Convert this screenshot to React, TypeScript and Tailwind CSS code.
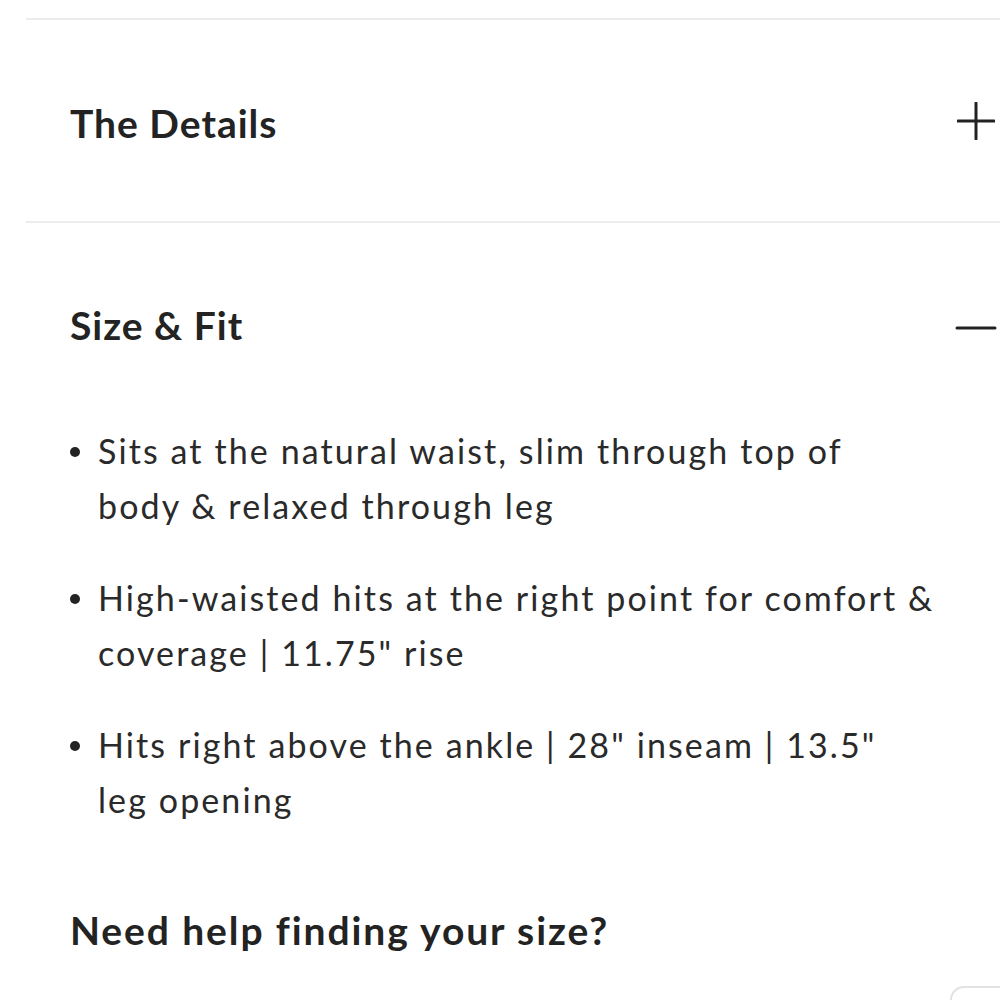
import React from "react";

const bullets = [
  ["Sits at the natural waist, slim through top of", "body & relaxed through leg"],
  ["High-waisted hits at the right point for comfort &", 'coverage | 11.75" rise'],
  ['Hits right above the ankle | 28" inseam | 13.5"', "leg opening"],
];

export default function App() {
  return (
    <div
      className="w-[1000px] h-[1000px] overflow-hidden bg-white text-[#232323]"
      style={{ fontFamily: "Lato, 'Noto Sans', sans-serif" }}
    >
      <div className="ml-[26px] mr-[-40px] pt-[18px]">
        {/* The Details */}
        <div className="border-t-2 border-[#ececec]">
          <div className="h-[201px] flex items-center justify-between pl-[44px] pr-[51px]">
            <h2 className="text-[39px] font-bold tracking-[1px] leading-none mt-[5px]">The Details</h2>
            <svg width="38" height="38" viewBox="0 0 38 38" className="mr-[-6px]">
              <path d="M19 1v36M1 19h36" stroke="#222" strokeWidth="3" strokeLinecap="round" />
            </svg>
          </div>
        </div>

        {/* Size & Fit */}
        <div className="border-t-2 border-[#ececec]">
          <div className="h-[210px] flex items-center justify-between pl-[44px] pr-[51px]">
            <h2 className="text-[39px] font-bold tracking-[1px] leading-none mt-[-5px]">Size &amp; Fit</h2>
            <svg width="42" height="6" viewBox="0 0 42 6" className="mr-[-8px]">
              <path d="M2 3h38" stroke="#222" strokeWidth="3" strokeLinecap="round" />
            </svg>
          </div>

          <ul className="pl-[44px] flex flex-col gap-[37px] mt-[-10px]">
            {bullets.map((b) => (
              <li key={b[0]} className="flex items-start">
                <span className="w-[10px] h-[10px] rounded-full bg-[#232323] mt-[24px] mr-[18px] shrink-0" />
                <p className="text-[34px] leading-[55px] tracking-[2.1px] text-[#2a2a2a] whitespace-nowrap">
                  {b[0]}
                  <br />
                  {b[1]}
                </p>
              </li>
            ))}
          </ul>

          <h3 className="pl-[44px] mt-[84px] text-[39px] font-bold tracking-[1.9px] leading-none">
            Need help finding your size?
          </h3>

          <div className="flex justify-end mt-[36px]">
            <div className="w-[120px] h-[40px] rounded-t-[14px] border-2 border-[#e2e2e2] mr-[-30px]" />
          </div>
        </div>
      </div>
    </div>
  );
}
